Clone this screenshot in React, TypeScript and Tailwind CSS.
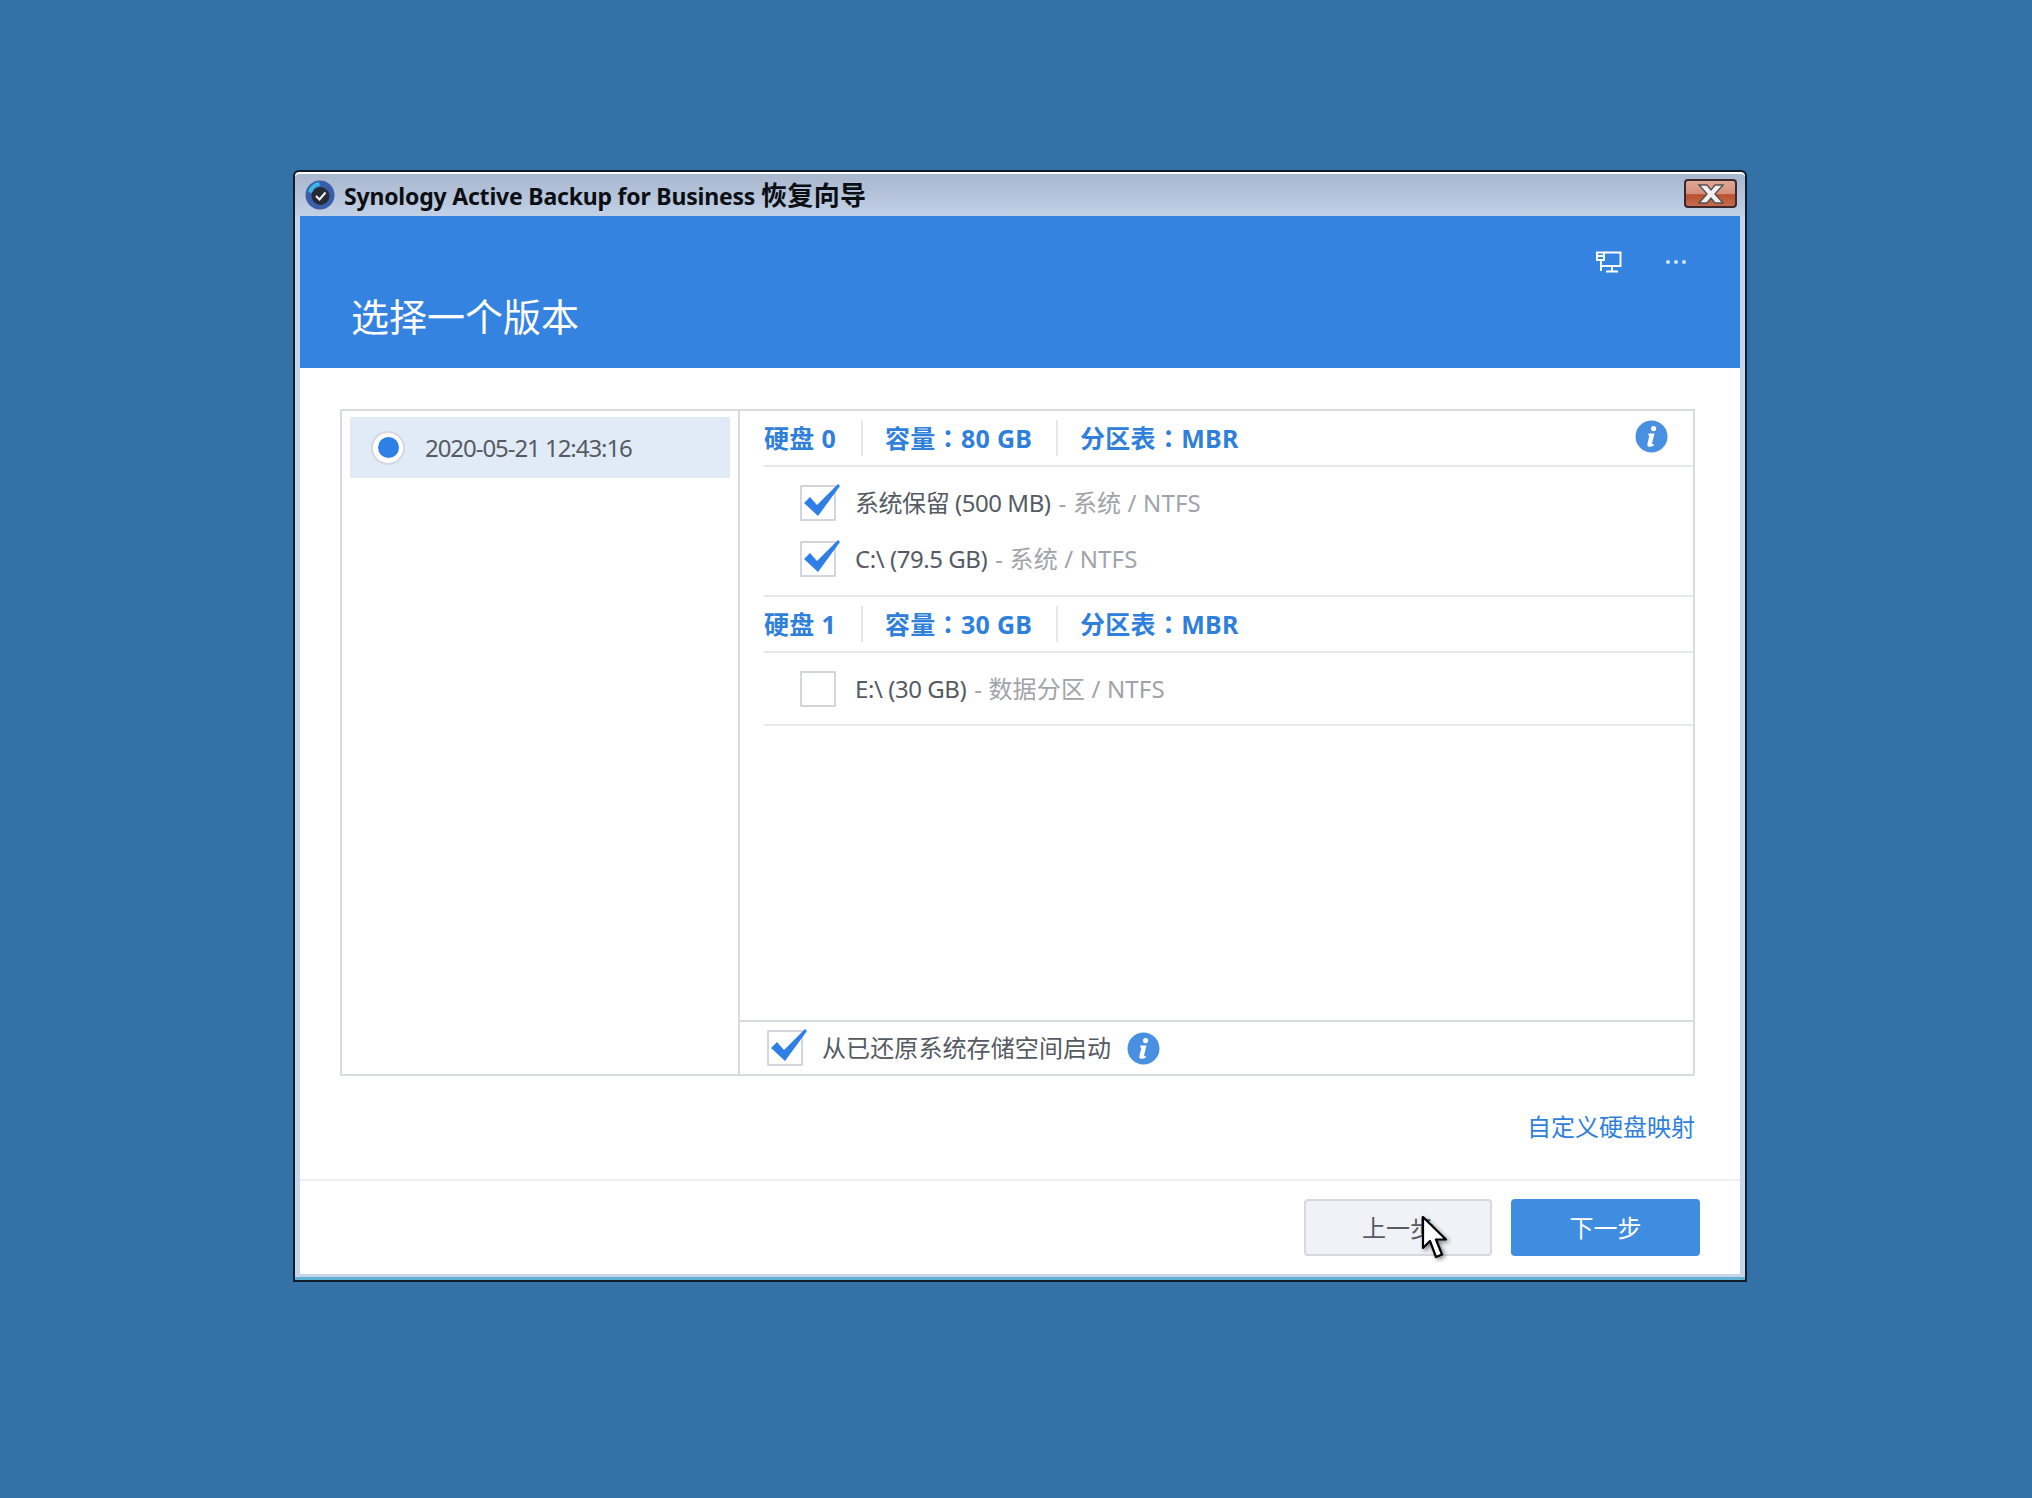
import React from 'react';

const cjk = "font-['Noto_Sans','Noto_Sans_CJK_SC',sans-serif]";

const CheckBox = ({ checked }: { checked?: boolean }) => (
    <div className="relative h-[36px] w-[36px] shrink-0 border-2 border-[#d3d7dd] bg-white">
        {checked && (
            <svg className="absolute left-[0px] top-[-6px] h-[38px] w-[40px]" viewBox="0 0 40 38">
                <path d="M2 22 L8 16 L15 24 L36 3 L38 5 L16 35 Z" fill="#2f80e6" />
            </svg>
        )}
    </div>
);

const InfoIcon = () => (
    <svg className="h-[33px] w-[33px] shrink-0" viewBox="0 0 33 33">
        <circle cx="16.5" cy="16.5" r="16" fill="#4a90e2" />
        <circle cx="18.6" cy="8.6" r="2.6" fill="#fff" />
        <path d="M13.5 13.5 H19.5 L17 23.5 Q16.8 24.8 19 24 L18.6 25.8 Q15 27.2 13 26.4 Q12 25.8 12.4 24 L14.4 15.4 L13 15.2 Z" fill="#fff" />
    </svg>
);

const Colon = () => <span className="font-['Noto_Sans_CJK_TC',sans-serif]">：</span>;

const DiskHeader = ({ disk, size }: { disk: string; size: string }) => (
    <div className="flex h-[56px] items-center border-b-2 border-[#e6e8ec] text-[25px] font-bold leading-none tracking-[0.3px] text-[#2f80dc]">
        <span className="w-[97px]">硬盘 {disk}</span>
        <span className="h-[36px] w-[2px] bg-[#e6e8ec]" />
        <span className="ml-[22px] w-[171px]">容量<Colon />{size} GB</span>
        <span className="h-[36px] w-[2px] bg-[#e6e8ec]" />
        <span className="ml-[22px]">分区表<Colon />MBR</span>
    </div>
);

const Volume = ({ name, kind, checked }: { name: string; kind: string; checked?: boolean }) => (
    <div className="flex h-[56px] items-center pl-[36px] text-[24px] leading-none">
        <CheckBox checked={checked} />
        <span className="ml-[19px] tracking-[-0.45px] text-[#555b63]">{name}</span>
        <span className="ml-[8px] tracking-[0.15px] text-[#a0a4aa]">- {kind} / NTFS</span>
    </div>
);

export default function App() {
    return (
        <div className={`relative h-[1498px] w-[2032px] overflow-hidden bg-[#3371a7] pl-[293px] pt-[170px] ${cjk}`}>
            {/* Window */}
            <div className="flex h-[1112px] w-[1454px] flex-col rounded-t-[6px] border-2 border-[#101c2a] bg-[#c6d5ea] shadow-[inset_0_-3px_0_#62b4d6]">
                {/* Title bar */}
                <div className="flex h-[44px] shrink-0 items-center rounded-t-[5px] border-t-2 border-white bg-gradient-to-b from-[#a8b7ce] to-[#c2d1e6] pl-[10px] pr-[8px]">
                    <svg className="h-[30px] w-[30px] shrink-0" viewBox="0 0 30 30">
                        <circle cx="15" cy="15" r="14.5" fill="#3a5fa8" />
                        <path d="M3 12 A13 13 0 0 1 14 2 L15 6 A9 9 0 0 0 7 13 Z" fill="#3fb6e8" />
                        <circle cx="15.5" cy="16" r="9" fill="#262a36" />
                        <path d="M11 16 L14.5 19.5 L20.5 12.5" fill="none" stroke="#f2f4f8" strokeWidth="2" />
                    </svg>
                    <span className="ml-[9px] text-[23px] font-bold leading-none tracking-[-0.2px] text-[#0b0f14]">
                        Synology Active Backup for Business <span className="text-[26px] tracking-[0.4px]">恢复向导</span>
                    </span>
                    <div className="ml-auto mb-[3px] flex h-[29px] w-[53px] items-center justify-center rounded-[4px] border-2 border-[#3a2a30] bg-[linear-gradient(to_bottom,#e0a797_0%,#d68f7d_50%,#b9502f_55%,#c66b4d_100%)]">
                        <svg className="h-[20px] w-[32px]" viewBox="0 0 32 20">
                            <path d="M4 1 H12 L16 6 L20 1 H28 L20 10 L28 19 H20 L16 14 L12 19 H4 L12 10 Z" fill="#f0f0f0" stroke="#55504f" strokeWidth="1.4" />
                        </svg>
                    </div>
                </div>

                {/* Content */}
                <div className="mx-[5px] flex min-h-0 flex-1 flex-col bg-white">
                    <div className="relative h-[152px] shrink-0 bg-[#3583e1]">
                        <div className="absolute right-[54px] top-[35px] flex items-center gap-[44px] text-white">
                            <svg className="h-[22px] w-[26px]" viewBox="0 0 26 22" fill="none" stroke="#fff" strokeWidth="1.9">
                                <path d="M8 1.5 H24.5 V15 H8" />
                                <path d="M1 1.5 H8 V9 H1 Z M1 5 H8" />
                                <path d="M5 9 V20 M5 15 H12 M16 15 V20 M10 20.5 H22" />
                            </svg>
                            <span className="flex gap-[4px]">
                                <i className="h-[4px] w-[4px] rounded-full bg-[#cfe2fa]" />
                                <i className="h-[4px] w-[4px] rounded-full bg-[#cfe2fa]" />
                                <i className="h-[4px] w-[4px] rounded-full bg-[#cfe2fa]" />
                            </span>
                        </div>
                        <h1 className="pl-[51px] pt-[75px] text-[38px] font-normal leading-[50px] text-white">选择一个版本</h1>
                    </div>

                    <div className="flex min-h-0 flex-1 flex-col pl-[40px] pr-[45px] pt-[41px]">
                        {/* Panel */}
                        <div className="flex h-[667px] shrink-0 border-2 border-[#d8dbe0]">
                            <div className="w-[398px] shrink-0 border-r-2 border-[#d8dbe0] px-[8px] pt-[6px]">
                                <div className="flex h-[61px] items-center bg-[#e1ebf7] pl-[21px]">
                                    <div className="flex h-[34px] w-[34px] items-center justify-center rounded-full border-2 border-[#d5d9df] bg-white">
                                        <div className="h-[21px] w-[21px] rounded-full bg-[#2f80e6]" />
                                    </div>
                                    <span className="ml-[20px] text-[24px] leading-none tracking-[-1.05px] text-[#555b63]">2020-05-21 12:43:16</span>
                                </div>
                            </div>
                            <div className="flex min-w-0 flex-1 flex-col">
                                <div className="relative flex-1 pl-[24px]">
                                    <div className="absolute right-[25px] top-[9px]">
                                        <InfoIcon />
                                    </div>
                                    <DiskHeader disk="0" size="80" />
                                    <div className="flex h-[130px] flex-col border-b-2 border-[#e6e8ec] pt-[8px]">
                                        <Volume name="系统保留 (500 MB)" kind="系统" checked />
                                        <Volume name="C:\ (79.5 GB)" kind="系统" checked />
                                    </div>
                                    <DiskHeader disk="1" size="30" />
                                    <div className="flex h-[73px] items-center border-b-2 border-[#e6e8ec]">
                                        <Volume name="E:\ (30 GB)" kind="数据分区" />
                                    </div>
                                </div>
                                <div className="flex h-[54px] shrink-0 items-center border-t-2 border-[#d8dbe0] pl-[27px] text-[24px] leading-none tracking-[0.1px] text-[#555b63]">
                                    <CheckBox checked />
                                    <span className="ml-[19px]">从已还原系统存储空间启动</span>
                                    <span className="ml-[16px]"><InfoIcon /></span>
                                </div>
                            </div>
                        </div>

                        <div className="flex h-[105px] shrink-0 items-center justify-end pb-[4px] text-[24px] leading-none text-[#2f80dc]">
                            自定义硬盘映射
                        </div>
                    </div>

                    {/* Footer */}
                    <div className="flex h-[95px] shrink-0 gap-[19px] border-t-2 border-[#eef0f4] pl-[1004px] pt-[18px] text-[24px] leading-none">
                        <button className="flex h-[57px] w-[188px] items-center justify-center rounded-[4px] border-2 border-[#d4d9e2] bg-[#f0f2f7] text-[#555b63]">上一步</button>
                        <button className="flex h-[57px] w-[189px] items-center justify-center rounded-[4px] bg-[#3f8de0] text-white">下一步</button>
                    </div>
                </div>
                <div className="h-[6px] shrink-0" />
            </div>

            {/* Mouse pointer */}
            <svg className="absolute left-[1421px] top-[1216px] h-[44px] w-[28px] drop-shadow-[2px_2px_2px_rgba(0,0,0,0.45)]" viewBox="0 0 28 44">
                <path d="M2 1 V32 L9 25 L15 41 L21 38.5 L15 23.5 H25 Z" fill="#fff" stroke="#000" strokeWidth="2.2" strokeLinejoin="round" />
            </svg>
        </div>
    );
}
